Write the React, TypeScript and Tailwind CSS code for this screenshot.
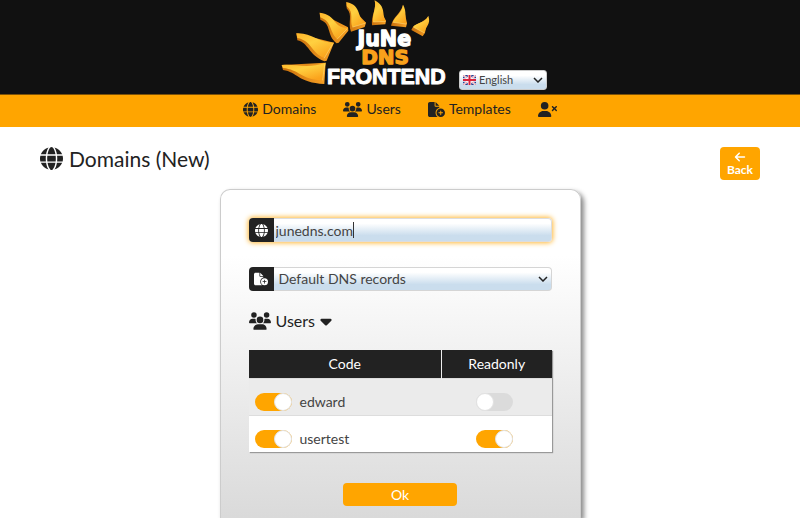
import { useState } from "react";
import type { ReactNode } from "react";
import {
  FaArrowLeft,
  FaCaretDown,
  FaFileCirclePlus,
  FaGlobe,
  FaUserXmark,
  FaUsers,
} from "react-icons/fa6";

function Logo() {
  return (
    <svg
      width="166"
      height="90"
      viewBox="33 0 498 270"
      role="img"
      aria-label="JuNe DNS Frontend"
    >
      <defs>
        <linearGradient id="ray" x1="0" y1="0" x2="0.7" y2="1">
          <stop offset="0" stopColor="#ffb52a" />
          <stop offset="0.45" stopColor="#ffd040" />
          <stop offset="1" stopColor="#fba31c" />
        </linearGradient>
        <linearGradient id="edge" x1="0" y1="0" x2="1" y2="0">
          <stop offset="0" stopColor="#c9700c" />
          <stop offset="1" stopColor="#f7a024" />
        </linearGradient>
      </defs>
      <g fill="url(#edge)">
        <path d="M35 195 L39 210 C82 216 84 248 163 252 L167 188 Z" />
        <path d="M79 100 L82 121 C116 128 114 164 163 184 L170 182 L192 128 Z" />
        <path d="M149 38 L151 59 C186 72 168 104 200 130 L206 128 L235 92 L234 82 Z" />
        <path d="M229 6 L230 25 C250 46 232 68 243 95 L284 81 L288 68 Z" />
        <path d="M314 1 C320 28 303 46 306 76 L346 73 L348 62 Z" />
        <path d="M399 14 C392 42 370 48 363 77 L408 82 L411 70 Z" />
        <path d="M475 48 C462 70 430 70 424 90 L458 109 L465 98 Z" />
      </g>
      <g fill="url(#ray)">
        <path d="M35 195 C74 190 112 208 167 188 L158 240 C96 242 88 208 39 204 Z" />
        <path d="M79 100 C122 96 144 128 192 128 L163 174 C122 158 126 122 82 114 Z" />
        <path d="M149 38 C202 44 186 84 235 84 L202 118 C176 94 188 66 151 52 Z" />
        <path d="M229 6 C278 16 258 56 288 68 L247 82 C238 58 254 40 230 19 Z" />
        <path d="M314 1 C350 20 334 44 348 64 L309 66 C306 42 320 25 314 1 Z" />
        <path d="M399 14 C412 36 402 54 411 72 L368 67 C376 46 397 40 399 14 Z" />
        <path d="M475 48 C484 74 466 78 464 99 L429 81 C438 68 466 70 475 48 Z" />
      </g>
      <g
        fill="none"
        stroke="#ffec94"
        strokeWidth="2"
        strokeLinecap="round"
        opacity="0.7"
      >
        <path d="M158 240 L164 194" />
        <path d="M163 174 L188 132" />
        <path d="M202 117 L230 88" />
        <path d="M249 81 L285 70" />
        <path d="M311 66 L346 64" />
        <path d="M370 67 L408 72" />
        <path d="M431 82 L462 98" />
      </g>
      <g
        textAnchor="middle"
        fontWeight="bold"
        strokeLinejoin="round"
        paintOrder="stroke"
      >
        <text
          x="343"
          y="137"
          fontSize="62"
          fontFamily="'DejaVu Sans', sans-serif"
          fill="#fff"
          stroke="#fff"
          strokeWidth="4"
        >
          JuNe
        </text>
        <text
          x="345"
          y="192"
          fontSize="60"
          fontFamily="'DejaVu Sans', sans-serif"
          fill="#f9a11b"
          stroke="#f9a11b"
          strokeWidth="4"
        >
          DNS
        </text>
        <text
          x="349"
          y="252"
          fontSize="64"
          fontFamily="'Liberation Sans', sans-serif"
          fill="#fff"
          stroke="#fff"
          strokeWidth="3"
        >
          FRONTEND
        </text>
      </g>
    </svg>
  );
}

function UkFlag() {
  return (
    <svg
      width="13"
      height="10"
      viewBox="0 0 26 20"
      aria-hidden="true"
      className="pointer-events-none absolute top-1/2 left-1 -translate-y-1/2"
    >
      <rect width="26" height="20" fill="#2b3f8f" />
      <path d="M0 0 26 20M26 0 0 20" stroke="#fff" strokeWidth="4" />
      <path d="M0 0 26 20M26 0 0 20" stroke="#d8233c" strokeWidth="1" />
      <path d="M13 0V20M0 10H26" stroke="#fff" strokeWidth="7" />
      <path d="M13 0V20M0 10H26" stroke="#d8233c" strokeWidth="4" />
    </svg>
  );
}

function Chevron() {
  return (
    <svg
      width="10"
      height="6"
      viewBox="0 0 10 6"
      aria-hidden="true"
      className="pointer-events-none absolute top-1/2 right-1 -translate-y-1/2"
    >
      <path d="M1 1 5 5 9 1" fill="none" stroke="#222" strokeWidth="1.5" />
    </svg>
  );
}

function NavLink({ icon, children }: { icon: ReactNode; children?: string }) {
  return (
    <a
      href="#"
      aria-label={children ?? "Log out"}
      className="flex items-center gap-1"
    >
      {icon}
      {children}
    </a>
  );
}

function Toggle({
  id,
  label,
  initial,
}: {
  id: string;
  label?: string;
  initial: boolean;
}) {
  const [on, setOn] = useState(initial);
  return (
    <input
      id={id}
      type="checkbox"
      aria-label={label}
      checked={on}
      onChange={(e) => setOn(e.target.checked)}
      className="h-[18px] w-[37px] shrink-0 appearance-none rounded-full bg-[#dbdbdb] before:block before:size-[18px] before:rounded-full before:border before:border-[#e2e2e2] before:bg-white checked:bg-[#ffa500] checked:before:ml-[19px]"
    />
  );
}

const users = [
  { code: "edward", selected: true, readonly: false },
  { code: "usertest", selected: true, readonly: true },
];

export default function App() {
  const [domain, setDomain] = useState("junedns.com");
  return (
    <div className="flex min-h-screen flex-col bg-white font-[Lato,sans-serif] text-[#222]">
      <header className="flex h-[94px] items-end justify-center gap-3 bg-[#111] pb-1 pl-7">
        <Logo />
        <div className="relative">
          <UkFlag />
          <select
            aria-label="Language"
            className="block h-5 w-[88px] appearance-none rounded-[3px] border border-[#ccc] bg-linear-to-b from-white from-25% to-[#cadded] to-75% pl-[19px] text-[11px] leading-4 text-[#444]"
          >
            <option>English</option>
          </select>
          <Chevron />
        </div>
      </header>
      <nav className="flex h-[33px] items-center justify-center gap-[27px] border-t border-[#7d5208] bg-[#ffa500] pb-1 text-[14px] leading-5">
        <NavLink icon={<FaGlobe size={15} />}>Domains</NavLink>
        <NavLink icon={<FaUsers size={19} />}>Users</NavLink>
        <NavLink icon={<FaFileCirclePlus size={17} />}>Templates</NavLink>
        <NavLink icon={<FaUserXmark size={19} />} />
      </nav>

      <main className="flex flex-1 flex-col px-10 pt-5">
        <div className="flex items-start justify-between">
          <h1 className="flex items-center gap-[6px] text-[21px] leading-[22px]">
            <FaGlobe size={23} />
            Domains (New)
          </h1>
          <button
            type="button"
            className="flex h-[33px] w-10 flex-col items-center justify-center rounded-[4px] bg-[#ffa500] text-xs leading-[14px] font-bold text-white"
          >
            <FaArrowLeft size={12} />
            Back
          </button>
        </div>

        <form
          onSubmit={(e) => e.preventDefault()}
          className="mx-auto mt-[9px] flex w-full max-w-[361px] flex-1 flex-col rounded-t-[10px] border border-b-0 border-[#ccc] bg-linear-to-b from-white from-20% to-[#dadada] px-7 pt-7 pb-3 shadow-[3px_3px_5px_#888]"
        >
          <div className="flex h-6 rounded-[4px] shadow-[0_0_5px_1px_#ffb836]">
            <label
              htmlFor="domain"
              aria-label="Domain"
              className="flex w-[25px] items-center justify-center rounded-l-[4px] bg-[#222] text-white"
            >
              <FaGlobe size={13} />
            </label>
            <div className="relative flex-1">
              <input
                id="domain"
                value={domain}
                onChange={(e) => setDomain(e.target.value)}
                className="block h-6 w-full rounded-r-[4px] border border-l-0 border-[#ddd] bg-linear-to-b from-white from-20% to-[#cadded] to-75% pl-[2px] text-[14px] leading-5 text-[#444] outline-none"
              />
              <span
                aria-hidden="true"
                className="absolute top-1 left-[79px] h-4 w-px bg-[#333]"
              />
            </div>
          </div>

          <div className="mt-[25px] flex h-6">
            <label
              htmlFor="template"
              aria-label="Template"
              className="flex w-[25px] items-center justify-center rounded-l-[4px] bg-[#222] text-white"
            >
              <FaFileCirclePlus size={14} />
            </label>
            <div className="relative flex-1">
              <select
                id="template"
                className="block h-6 w-full appearance-none rounded-r-[4px] border border-l-0 border-[#d5d5d5] bg-linear-to-b from-white from-20% to-[#cadded] to-75% pl-[5px] text-[14px] leading-5 text-[#444]"
              >
                <option>Default DNS records</option>
              </select>
              <Chevron />
            </div>
          </div>

          <h2 className="mt-[18px] flex items-center gap-[5px] text-[16px] leading-6">
            <FaUsers size={22} />
            <button type="button" className="flex items-center gap-[2px]">
              Users
              <FaCaretDown size={18} />
            </button>
          </h2>

          <table className="mt-[17px] w-full border-collapse text-[14px] leading-5 text-[#444] shadow-[1px_1px_1px_#999]">
            <thead>
              <tr className="h-7 bg-[#222] text-white">
                <th className="border-r border-[#eee] font-normal">Code</th>
                <th className="w-[110px] font-normal">Readonly</th>
              </tr>
            </thead>
            <tbody>
              {users.map((u) => (
                <tr
                  key={u.code}
                  className="h-[37px] border-t border-[#ddd] odd:bg-[#ebebeb] even:bg-white"
                >
                  <td className="pt-[10px] pl-[6px]">
                    <label className="flex items-center gap-2">
                      <Toggle id={"user-" + u.code} initial={u.selected} />
                      {u.code}
                    </label>
                  </td>
                  <td className="pt-[10px] pr-1">
                    <div className="flex justify-center">
                      <Toggle
                        id={"readonly-" + u.code}
                        label={"Readonly " + u.code}
                        initial={u.readonly}
                      />
                    </div>
                  </td>
                </tr>
              ))}
            </tbody>
          </table>

          <button
            type="submit"
            className="mx-auto mt-[31px] h-[23px] w-[114px] rounded-[4px] bg-[#ffa500] text-[14px] leading-5 text-white"
          >
            Ok
          </button>
        </form>
      </main>
    </div>
  );
}
